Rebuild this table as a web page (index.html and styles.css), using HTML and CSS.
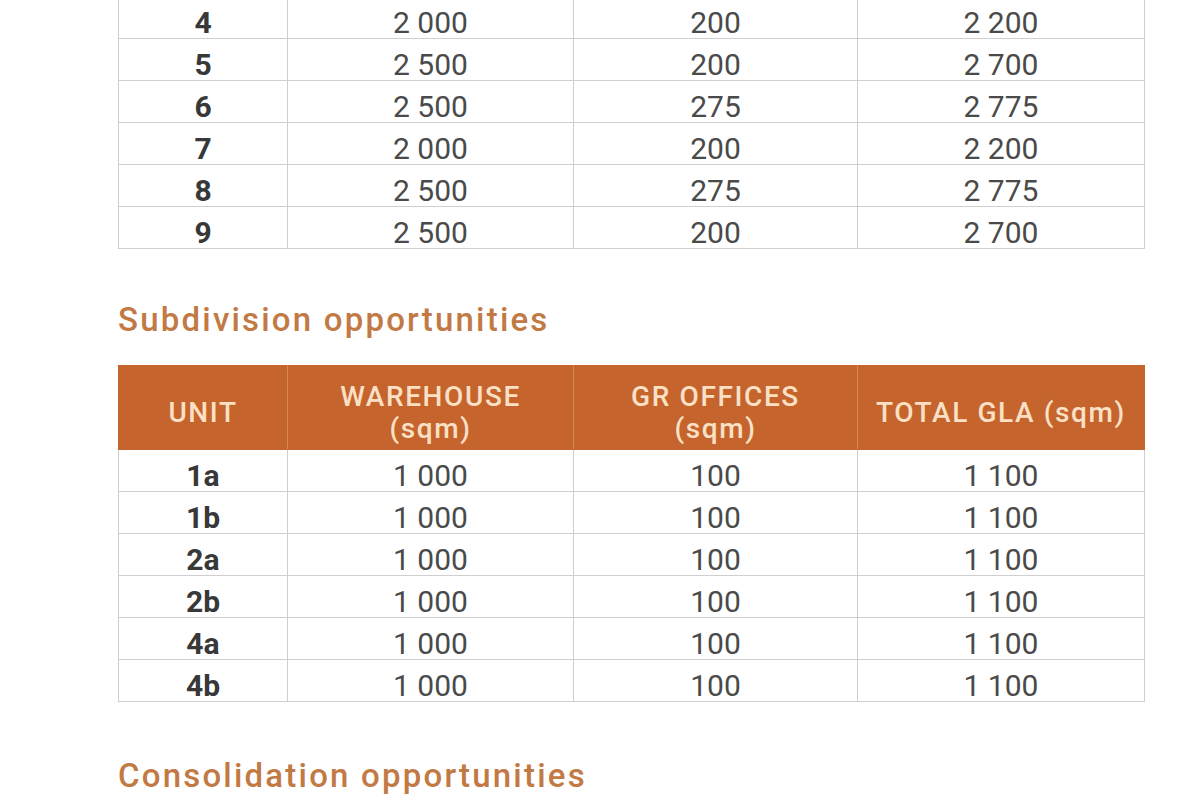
FILE: index.html
```html
<!DOCTYPE html>
<html lang="en">
<head>
<meta charset="utf-8">
<title>Unit schedule</title>
<link rel="stylesheet" href="styles.css">
</head>
<body>
<main class="page">
  <table class="grid grid-top">
    <colgroup><col class="c1"><col class="c2"><col class="c3"><col class="c4"></colgroup>
    <tbody>
      <tr><td class="unit">4</td><td>2 000</td><td>200</td><td>2 200</td></tr>
      <tr><td class="unit">5</td><td>2 500</td><td>200</td><td>2 700</td></tr>
      <tr><td class="unit">6</td><td>2 500</td><td>275</td><td>2 775</td></tr>
      <tr><td class="unit">7</td><td>2 000</td><td>200</td><td>2 200</td></tr>
      <tr><td class="unit">8</td><td>2 500</td><td>275</td><td>2 775</td></tr>
      <tr><td class="unit">9</td><td>2 500</td><td>200</td><td>2 700</td></tr>
    </tbody>
  </table>

  <h2 class="section-title">Subdivision opportunities</h2>
  <table class="grid">
    <colgroup><col class="c1"><col class="c2"><col class="c3"><col class="c4"></colgroup>
    <thead>
      <tr><th>UNIT</th><th>WAREHOUSE<br>(sqm)</th><th>GR OFFICES<br>(sqm)</th><th>TOTAL GLA (sqm)</th></tr>
    </thead>
    <tbody>
      <tr><td class="unit">1a</td><td>1 000</td><td>100</td><td>1 100</td></tr>
      <tr><td class="unit">1b</td><td>1 000</td><td>100</td><td>1 100</td></tr>
      <tr><td class="unit">2a</td><td>1 000</td><td>100</td><td>1 100</td></tr>
      <tr><td class="unit">2b</td><td>1 000</td><td>100</td><td>1 100</td></tr>
      <tr><td class="unit">4a</td><td>1 000</td><td>100</td><td>1 100</td></tr>
      <tr><td class="unit">4b</td><td>1 000</td><td>100</td><td>1 100</td></tr>
    </tbody>
  </table>

  <h2 class="section-title section-title-last">Consolidation opportunities</h2>
</main>
</body>
</html>
```

FILE: styles.css
```css
html, body {
  margin: 0;
  padding: 0;
  background: #ffffff;
}

body {
  font-family: Roboto, "Liberation Sans", Arial, sans-serif;
  overflow: hidden;
}

.page {
  width: 1026px;
  margin: -4px 0 0 118px;
}

.grid {
  width: 1026px;
  border-collapse: collapse;
  table-layout: fixed;
}

.c1 { width: 169px; }
.c2 { width: 286px; }
.c3 { width: 284px; }
.c4 { width: 287px; }

.grid td {
  border: 1px solid #cfcfcf;
  text-align: center;
  font-size: 30px;
  line-height: 30px;
  padding: 11px 0 0;
  color: #4a4a4a;
  font-weight: 400;
}

.grid td.unit {
  font-weight: 700;
  color: #383838;
}

.grid th {
  background: #c5642c;
  color: #fbe0c6;
  font-size: 28px;
  font-weight: 500;
  letter-spacing: 1.6px;
  line-height: 32px;
  height: 73px;
  padding: 10px 2px 0;
  vertical-align: middle;
  border-left: 1px solid #d8895a;
  border-right: 1px solid #d8895a;
  border-top: 1px solid #c5642c;
  border-bottom: 1px solid #c5642c;
}

.grid th:first-child { border-left-color: #c5642c; }
.grid th:last-child { border-right-color: #c5642c; }

.section-title {
  margin: 53px 0 27px;
  font-size: 33px;
  line-height: 36px;
  letter-spacing: 2.2px;
  font-weight: 500;
  color: #c27a45;
}

.section-title-last {
  margin-top: 56px;
}
```
